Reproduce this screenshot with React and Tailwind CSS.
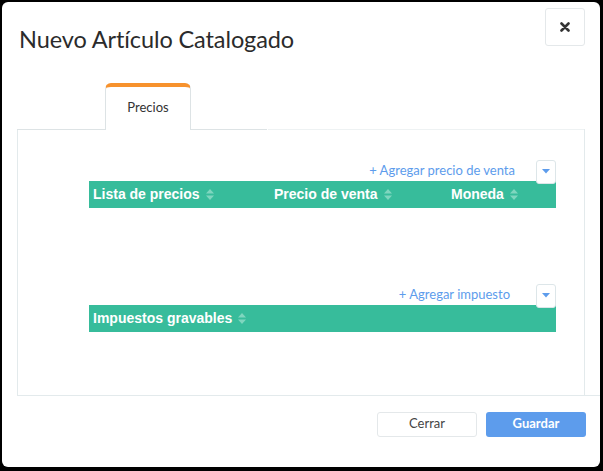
import React from 'react';

const SortIcon = () => (
    <svg width="8" height="11" viewBox="0 0 8 11" className="ml-[6px] inline-block">
        <path d="M4 0 L8 4.5 L0 4.5 Z" fill="#7fd6bf" />
        <path d="M4 11 L8 6.5 L0 6.5 Z" fill="#7fd6bf" />
    </svg>
);

const CaretButton = () => (
    <button className="relative z-10 w-[20px] h-[24px] bg-white border border-[#dde6e9] rounded-[3px] flex items-center justify-center self-start">
        <svg width="8" height="5" viewBox="0 0 8 5"><path d="M0 0 L8 0 L4 4.5 Z" fill="#5d9cec" /></svg>
    </button>
);

const GreenTable = ({ link, linkGap, columns }) => (
    <div>
        {/* toolbar */}
        <div className="flex justify-end h-[21px]">
            <a className="text-[13px] text-[#5d9cec] leading-none mt-[4px]" style={{ marginRight: linkGap }}>{link}</a>
            <CaretButton />
        </div>
        {/* header */}
        <div className="flex h-[27px] items-center bg-[#37bc9b] text-white font-bold text-[14px] pl-[4px] font-['Liberation_Sans',Arial,sans-serif]">
            {columns.map((c) => (
                <div key={c.label} className="flex items-center" style={{ width: c.w }}>
                    {c.label}<SortIcon />
                </div>
            ))}
        </div>
    </div>
);

export default function App() {
    return (
        <div className="w-[603px] h-[471px] bg-black pt-[2px] pl-[2px] font-['Lato','Noto_Sans',sans-serif]">
            <div className="w-[598px] h-[465px] bg-white rounded-[6px] flex flex-col">
                {/* Header */}
                <div className="flex justify-between pl-[17px] pr-[15px] pt-[6px]">
                    <h1 className="text-[23.5px] text-[#2b2b2b] mt-[20px] leading-none tracking-[-0.1px]">Nuevo Artículo Catalogado</h1>
                    <button className="w-[40px] h-[38px] border border-[#e4e8ea] rounded-[3px] flex items-center justify-center">
                        <svg width="10" height="10" viewBox="0 0 10 10">
                            <path d="M1.5 1.5 L8.5 8.5 M8.5 1.5 L1.5 8.5" stroke="#333" strokeWidth="2.6" strokeLinecap="round" />
                        </svg>
                    </button>
                </div>

                {/* Tabs */}
                <div className="mt-[31px] ml-[15px] w-[568px]">
                    <div className="flex items-end">
                        <div className="w-[88px] h-[45px] border-b border-[#dde3e5]" />
                        <div className="w-[86px] h-[47px] border-t-[4px] border-t-[#f7922d] border-x border-x-[#dde3e5] rounded-t-[6px] flex items-center justify-center text-[13px] text-[#333]">
                            Precios
                        </div>
                        <div className="w-[76px] h-[45px] border-b border-[#dde3e5]" />
                    </div>
                    {/* Panel */}
                    <div className="h-[267px] border-x border-b border-[#e3eaec] pt-[31px] pl-[71px] pr-[28px] -mt-px">
                        <div className="border-t border-[#eef2f3] -mt-[31px] mb-[30px] ml-[179px] -mr-[28px]" />
                        <GreenTable
                            link="+ Agregar precio de venta"
                            linkGap="21px"
                            columns={[
                                { label: 'Lista de precios', w: '181px' },
                                { label: 'Precio de venta', w: '177px' },
                                { label: 'Moneda', w: '100px' },
                            ]}
                        />
                        <div className="h-[76px]" />
                        <GreenTable
                            link="+ Agregar impuesto"
                            linkGap="26px"
                            columns={[{ label: 'Impuestos gravables', w: '200px' }]}
                        />
                    </div>
                </div>

                {/* Footer */}
                <div className="ml-[15px] border-t border-[#e3eaec] -mt-px flex justify-end gap-[9px] pt-[16px] pr-[14px]">
                    <button className="w-[100px] h-[25px] border border-[#e4e8ea] rounded-[3px] text-[13px] text-[#444] bg-white">Cerrar</button>
                    <button className="w-[100px] h-[25px] rounded-[3px] text-[13px] font-bold text-white bg-[#5d9cec]">Guardar</button>
                </div>
            </div>
        </div>
    );
}
